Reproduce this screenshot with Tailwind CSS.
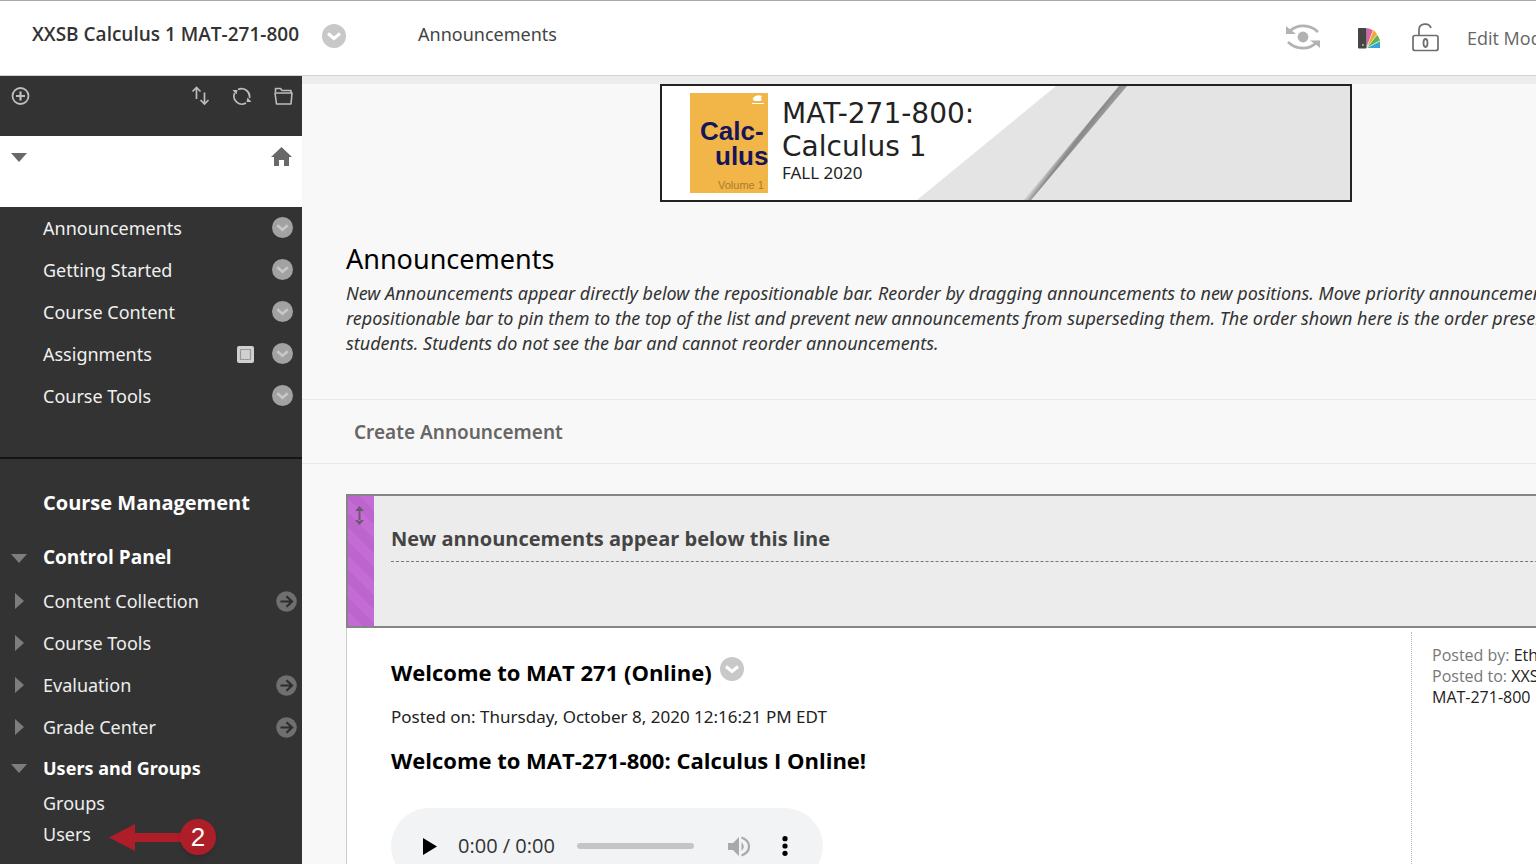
<!DOCTYPE html>
<html lang="en">
<head>
<meta charset="utf-8">
<meta name="viewport" content="width=device-width, initial-scale=1">
<title>Announcements – XXSB Calculus 1 MAT-271-800</title>
<script src="https://cdn.jsdelivr.net/npm/@tailwindcss/browser@4"></script>
</head>
<body class="h-screen overflow-hidden bg-[#f8f8f8] font-['Noto_Sans','Open_Sans',sans-serif] text-black">
<!-- Shared icons -->
<svg class="hidden" aria-hidden="true">
  <symbol id="chev" viewBox="0 0 24 24"><circle cx="12" cy="12" r="12" fill="currentColor"/><path d="M6 9.500 12 14.500 18 9.500" fill="none" stroke="var(--mark)" stroke-width="3"/></symbol>
  <symbol id="go" viewBox="0 0 21 21"><circle cx="10.500" cy="10.500" r="10.300" fill="#6f6f6f"/><path d="M4.500 10.500H15.500M10.500 5.200l5.500 5.300-5.500 5.300" fill="none" stroke="#2d2d2d" stroke-width="2.200"/></symbol>
  <symbol id="down" viewBox="0 0 16 9"><path d="M0 0H16L8 9Z" fill="currentColor"/></symbol>
  <symbol id="right" viewBox="0 0 9 16"><path d="M0 0V16L9 8Z" fill="currentColor"/></symbol>
</svg>
<div class="flex h-full flex-col">
  <header class="flex h-[76px] shrink-0 items-start overflow-hidden whitespace-nowrap border-t border-b border-t-[#a9a9a9] border-b-[#d2d2d2] bg-white pl-8">
    <a href="#" class="mt-[19px] w-[265px] font-['Open_Sans',sans-serif] text-[19px] leading-7 font-semibold text-[#333]">XXSB Calculus 1 MAT-271-800</a>
    <button aria-label="Course options" class="mt-[23px] ml-[25px] size-6 shrink-0 text-[#c8c8c8] [--mark:#fff]"><svg class="size-6"><use href="#chev"/></svg></button>
    <a href="#" class="mt-[19px] ml-[72px] text-lg leading-7 text-[#444]">Announcements</a>
    <div class="mr-[-57px] ml-auto flex items-start font-['Open_Sans',sans-serif] text-lg leading-7 text-[#666]">
      <button aria-label="Student preview" class="mt-[23px]"><svg class="h-[26px] w-[34px]" viewBox="0 0 34 26" fill="none" stroke="#b2b2b2" stroke-width="2.600"><circle cx="17" cy="13" r="5.400" fill="#b2b2b2" stroke="none"/><path d="M4 7C11 0 24 0 32 8M2 18C10 26 23 26 30 19"/><path d="M0 2 3.500 5 10 10H0Z M34 24 30.500 21 24 16.500H34Z" fill="#b2b2b2" stroke="none"/></svg></button>
      <button aria-label="Change theme" class="mt-[27px] ml-[38px]"><svg class="h-[21px] w-[23px]" viewBox="0 0 23 21"><path d="M8.500 20V0Q12 0 15 2.500L8.500 20Z" fill="#dc62ae"/><path d="M8.500 20 15 2Q17.500 3.500 19 6L8.500 20Z" fill="#f3a638"/><path d="M8.500 20 19 6.500Q21 9 22 12.500L8.500 20Z" fill="#62b246"/><path d="M8.500 20 22 13V20Z" fill="#39a5d4"/><path d="M8.500 20 15 3M8.500 20 19 7M8.500 20 22 13" stroke="#fff" stroke-width=".5"/><rect y="0" width="8.500" height="20.500" rx="1" fill="#454545"/><circle cx="5" cy="17" r="1" fill="#bbb"/></svg></button>
      <button aria-label="Guest access unlocked" class="mt-[22px] ml-[31px]"><svg class="h-[29px] w-[27px]" viewBox="0 0 27 29" fill="none" stroke="#6e6e6e" stroke-width="1.700"><rect x="1" y="12.500" width="25" height="15" rx="2"/><path d="M7 12V7C7 0 17 -1 19 5"/><ellipse cx="13.500" cy="20" rx="2" ry="4" stroke-width="1.800"/></svg></button>
      <span class="mt-[23px] ml-7">Edit Mode is: &nbsp; &nbsp;</span>
    </div>
  </header>
  <div class="flex min-h-0 flex-1">
    <aside class="relative w-[302px] shrink-0 overflow-hidden bg-[#333] text-lg text-[#eee]">
      <div class="flex h-[60px] items-start gap-[22px] pt-[10px] pr-[9px] pl-[11px] text-[#bdbdbd]">
        <button aria-label="Add menu item" class="mr-auto"><svg class="size-[19px]" viewBox="0 0 19 19" fill="none" stroke="currentColor" stroke-width="1.800"><circle cx="9.500" cy="10" r="8"/><path d="M5 10H14M9.500 5.500V14.500" stroke-width="2.200"/></svg></button>
        <button aria-label="Reorder"><svg class="h-5 w-[19px]" viewBox="0 0 19 20" fill="none" stroke="currentColor" stroke-width="1.700"><path d="M5.500 13V1.500M1.500 5.500 5.500 1.500 9.500 5.500M13.500 6.500V18M9.500 14 13.500 18 17.500 14"/></svg></button>
        <button aria-label="Refresh"><svg class="size-5" viewBox="0 0 20 20" fill="none" stroke="currentColor" stroke-width="1.700"><path d="M6 3.600A8 8 0 0 1 17.500 12M2.600 7A8 8 0 0 0 14 17"/><path d="M.5 4 5.500 4 4.500 8.500Z M19.500 16 14.500 16 15.500 11.500Z" fill="currentColor" stroke="none"/></svg></button>
        <button aria-label="Folder view"><svg class="h-5 w-[19px]" viewBox="0 0 19 20" fill="none" stroke="currentColor" stroke-width="1.600"><path d="M1.500 6V2.500H6.500L8 4.500H17V7M1 7H18L17 18H2.500Z" stroke-linejoin="round"/></svg></button>
      </div>
      <div class="flex h-[71px] items-start justify-between bg-white pt-[11px] pr-[10px] pl-[11px] text-[#696969]">
        <button aria-label="Collapse menu" class="mt-[6px]"><svg class="h-[9px] w-4"><use href="#down"/></svg></button>
        <a href="#" aria-label="Course home"><svg class="h-[19px] w-[21px]" viewBox="0 0 21 19" fill="currentColor"><path d="M10.500 0 21 10H18V19H13V13H8V19H3V10H0Z"/></svg></a>
      </div>
      <nav aria-label="Course menu" class="h-[252px] border-b-2 border-[#151515] pr-[9px] pl-[43px] text-[#a2a2a2] [--mark:#c8c8c8]">
        <div class="flex h-[42px] items-center justify-between"><a href="#" class="text-[#f0f0f0]">Announcements</a><button aria-label="Announcements options"><svg class="mb-[2px] size-[21px]"><use href="#chev"/></svg></button></div>
        <div class="flex h-[42px] items-center justify-between"><a href="#" class="text-[#f0f0f0]">Getting Started</a><button aria-label="Getting Started options"><svg class="mb-[2px] size-[21px]"><use href="#chev"/></svg></button></div>
        <div class="flex h-[42px] items-center justify-between"><a href="#" class="text-[#f0f0f0]">Course Content</a><button aria-label="Course Content options"><svg class="mb-[2px] size-[21px]"><use href="#chev"/></svg></button></div>
        <div class="flex h-[42px] items-center"><a href="#" class="mr-auto text-[#f0f0f0]">Assignments</a><svg class="mr-[18px] size-[17px]" viewBox="0 0 17 17"><rect width="17" height="17" rx="2" fill="#d0d0d0"/><rect x="3.500" y="3.500" width="10" height="10" fill="none" stroke="#777" stroke-width="1.200" stroke-dasharray="1.200 .8"/></svg><button aria-label="Assignments options"><svg class="mb-[2px] size-[21px]"><use href="#chev"/></svg></button></div>
        <div class="flex h-[42px] items-center justify-between"><a href="#" class="text-[#f0f0f0]">Course Tools</a><button aria-label="Course Tools options"><svg class="mb-[2px] size-[21px]"><use href="#chev"/></svg></button></div>
      </nav>
      <nav aria-label="Course management" class="pt-7 pr-[5px] pl-[11px] text-[#7d7d7d]">
        <h2 class="pl-8 font-['Open_Sans',sans-serif] text-xl leading-8 font-bold text-white">Course Management</h2>
        <div class="mt-[17px] flex h-11 items-center"><svg class="mr-4 h-[9px] w-4"><use href="#down"/></svg><a href="#" class="font-['Open_Sans',sans-serif] text-[19px] font-bold text-white">Control Panel</a></div>
        <div class="flex h-[42px] items-center"><svg class="mr-[19px] ml-1 h-4 w-[9px]"><use href="#right"/></svg><a href="#" class="mr-auto text-[#eee]">Content Collection</a><button aria-label="Open Content Collection"><svg class="size-[21px]"><use href="#go"/></svg></button></div>
        <div class="flex h-[42px] items-center"><svg class="mr-[19px] ml-1 h-4 w-[9px]"><use href="#right"/></svg><a href="#" class="text-[#eee]">Course Tools</a></div>
        <div class="flex h-[42px] items-center"><svg class="mr-[19px] ml-1 h-4 w-[9px]"><use href="#right"/></svg><a href="#" class="mr-auto text-[#eee]">Evaluation</a><button aria-label="Open Evaluation"><svg class="size-[21px]"><use href="#go"/></svg></button></div>
        <div class="flex h-[42px] items-center"><svg class="mr-[19px] ml-1 h-4 w-[9px]"><use href="#right"/></svg><a href="#" class="mr-auto text-[#eee]">Grade Center</a><button aria-label="Open Grade Center"><svg class="size-[21px]"><use href="#go"/></svg></button></div>
        <div class="flex h-10 items-center"><svg class="mr-4 h-[9px] w-4"><use href="#down"/></svg><a href="#" class="font-bold text-white">Users and Groups</a></div>
        <a href="#" class="block pl-8 leading-[31px] text-[#eee]">Groups</a>
        <a href="#" class="block pl-8 leading-[31px] text-[#eee]">Users</a>
      </nav>
      <!-- Step marker pointing at Users -->
      <div class="absolute top-[743px] left-[109px] flex items-center">
        <svg class="h-[27px] w-[72px]" viewBox="0 0 72 27"><path d="M0 13.500 26 0V9H72V18H26V27Z" fill="#ae1e28"/></svg>
        <span class="-ml-px flex size-9 items-center justify-center rounded-full bg-[#ae1e28] font-['Liberation_Sans',sans-serif] text-[26px] text-white shadow-md">2</span>
      </div>
    </aside>
    <main class="min-w-0 flex-1 overflow-hidden border-t-8 border-[#ededed]">
      <div class="min-w-[1408px]">
        <div class="relative mx-auto flex h-[118px] w-[692px] border-2 border-[#222] bg-white pt-[7px] pl-7">
          <svg class="absolute inset-0 size-full" viewBox="0 0 688 114" preserveAspectRatio="none"><defs><linearGradient id="bar" gradientUnits="userSpaceOnUse" x1="408" y1="55" x2="416" y2="61"><stop offset="0" stop-color="#c8c8c8"/><stop offset=".5" stop-color="#888"/><stop offset="1" stop-color="#999"/></linearGradient></defs><path d="M394 0H688V114H255Z" fill="#e4e4e4"/><path d="M457 0H465L369 114H362Z" fill="url(#bar)"/></svg>
          <div class="relative h-[100px] w-[78px] shrink-0 overflow-hidden bg-[#f1b548] font-['Liberation_Sans',sans-serif] whitespace-nowrap text-[#17155a]">
            <svg class="absolute top-[2px] right-1 h-[10px] w-3" viewBox="0 0 12 10" fill="#fff"><path d="M1 3Q4-1 10 1L9 3Q11 6 7 6H3Q0 5 1 3ZM0 8H12V9H0Z"/></svg>
            <div class="pt-[26px] pl-[10px] text-[26px] leading-[25px] font-bold">Calc-</div>
            <div class="pl-[25px] text-[26px] leading-[25px] font-bold">ulus</div>
            <div class="mt-2 pl-7 text-[11px] leading-4 text-[#a97c2c]">Volume 1</div>
          </div>
          <div class="relative ml-[14px] font-['DejaVu_Sans',sans-serif] text-[#222]">
            <div class="pt-1 text-[28px] leading-[33px]">MAT-271-800:<br>Calculus 1</div>
            <div class="font-['Noto_Sans',sans-serif] text-[17px] leading-5">FALL 2020</div>
          </div>
        </div>
        <section class="pt-[39px] pl-11 whitespace-nowrap">
          <h1 class="text-[27px] leading-9">Announcements</h1>
          <p class="mt-1 text-lg leading-[25px] text-[#333] italic">New Announcements appear directly below the repositionable bar. Reorder by dragging announcements to new positions. Move priority announcements above the<br>repositionable bar to pin them to the top of the list and prevent new announcements from superseding them. The order shown here is the order presented to<br>students. Students do not see the bar and cannot reorder announcements.</p>
        </section>
        <div class="mt-[43px] flex h-[65px] items-center border-y border-[#e9e9e9] pl-[52px]"><button class="text-[19px] leading-7 font-semibold text-[#666]">Create Announcement</button></div>
        <section class="ml-11 mt-[30px]">
          <div class="flex h-[134px] border-2 border-[#858585] bg-[#ececec]">
            <button aria-label="Move bar" class="flex w-[26px] justify-center bg-[repeating-linear-gradient(45deg,#c56bd6_0_10px,#bc65cc_10px_20px)] pt-[10px] pr-1"><svg class="h-[19px] w-[9px]" viewBox="0 0 9 19" fill="#6b596f"><path d="M4.500 0 9 5H0ZM4.500 19 9 14H0ZM3.500 4H5.500V15H3.500Z"/></svg></button>
            <div class="ml-[17px] flex-1 pt-[29px]"><div class="border-b border-dashed border-[#777] pb-2"><h2 class="font-['Open_Sans',sans-serif] text-xl leading-7 font-bold text-[#444]">New announcements appear below this line</h2></div></div>
          </div>
          <div class="flex border-l border-[#ccc] bg-white">
            <article class="w-[1064px] shrink-0 pt-7 pl-11">
              <div class="flex items-start font-['Open_Sans',sans-serif]"><h2 class="text-[22px] leading-8 font-bold">Welcome to MAT 271 (Online)</h2><button aria-label="Announcement options" class="ml-2 text-[#c8c8c8] [--mark:#fff]"><svg class="mt-px size-6"><use href="#chev"/></svg></button></div>
              <p class="mt-[17px] text-[17px] leading-6 text-[#222]">Posted on: Thursday, October 8, 2020 12:16:21 PM EDT</p>
              <h3 class="mt-[15px] font-['Open_Sans',sans-serif] text-[22px] leading-8 font-bold">Welcome to MAT-271-800: Calculus I Online!</h3>
              <div role="group" aria-label="Audio player" class="mt-8 flex h-[76px] w-[432px] items-center rounded-full bg-[#f1f3f4] pl-8 font-['Open_Sans',sans-serif] text-xl text-[#333]">
                <button aria-label="Play"><svg class="h-[17px] w-[14px]" viewBox="0 0 14 17"><path d="M0 0V17L14 8.500Z"/></svg></button>
                <span class="ml-[21px] w-[119px] whitespace-nowrap">0:00 / 0:00</span>
                <input type="range" aria-label="Seek" min="0" max="100" value="0" class="h-[6px] w-[117px] appearance-none rounded-full bg-[#c3c5c6] [&::-webkit-slider-thumb]:size-0 [&::-webkit-slider-thumb]:appearance-none">
                <button aria-label="Mute" class="ml-[34px]"><svg class="h-[21px] w-[22px]" viewBox="0 0 22 21" fill="#a8a9aa"><path d="M0 7H5L11 1V20L5 14H0Z"/><path d="M13.500 6Q18 10.500 13.500 15Z"/><path d="M13.500 1.500C23.500 5 23.500 16 13.500 19.500" fill="none" stroke="#a8a9aa" stroke-width="2.200"/></svg></button>
                <button aria-label="More options" class="ml-8"><svg class="h-5 w-[6px]" viewBox="0 0 6 20"><circle cx="3" cy="2.700" r="2.600"/><circle cx="3" cy="10" r="2.600"/><circle cx="3" cy="17.300" r="2.600"/></svg></button>
              </div>
            </article>
            <div class="mt-1 min-h-[240px] flex-1 border-l border-dotted border-[#bbb] pt-[13px] pl-5 font-['Open_Sans',sans-serif] text-base leading-[21px] text-[#222]">
              <p><span class="text-[#777]">Posted by:</span> Ethan</p>
              <p><span class="text-[#777]">Posted to:</span> XXSB Calculus 1<br>MAT-271-800</p>
            </div>
          </div>
        </section>
      </div>
    </main>
  </div>
</div>
</body>
</html>
